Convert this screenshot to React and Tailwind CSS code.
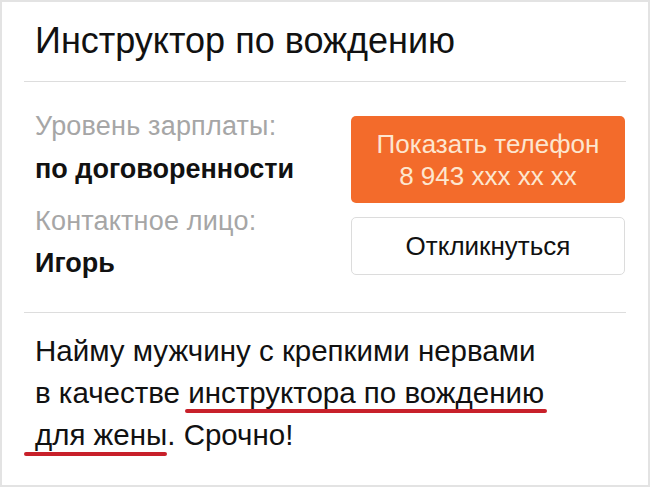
export default function App() {
  return (
    <div className="w-[650px] h-[487px] bg-white border-2 border-[#e3e3e3] font-['Liberation_Sans',Arial,sans-serif] text-[#111] overflow-hidden">
      <div className="px-[22px]">
        <h1 className="pl-[11px] pt-[16px] pb-[17px] text-[36px] leading-[46px] font-normal whitespace-nowrap">
          Инструктор по вождению
        </h1>
        <div className="h-px bg-[#dddddd]" />
        <div className="flex items-start pb-[33px]">
          <div className="flex-1 pl-[11px] pt-[28px] flex flex-col whitespace-nowrap">
            <div className="text-[27px] leading-[32px] tracking-[0.2px] text-[#a6a6a6]">Уровень зарплаты:</div>
            <div className="mt-[11px] text-[27px] leading-[32px] font-bold">по договоренности</div>
            <div className="mt-[20px] text-[27px] leading-[32px] tracking-[0.2px] text-[#a6a6a6]">Контактное лицо:</div>
            <div className="mt-[10px] text-[27px] leading-[32px] font-bold">Игорь</div>
          </div>
          <div className="w-[274px] mr-[1px] pt-[34px] flex flex-col gap-[14px]">
            <div className="h-[87px] rounded-[5px] bg-[#f36b2b] text-[#fde6cf] flex flex-col items-center justify-center text-[26px] leading-[32px]">
              <span>Показать телефон</span>
              <span>8 943 xxx xx xx</span>
            </div>
            <div className="h-[58px] rounded-[5px] border border-[#dcdcdc] flex items-center justify-center text-[26px] leading-[30px]">
              Откликнуться
            </div>
          </div>
        </div>
        <div className="h-px bg-[#dddddd]" />
        <p className="pl-[11px] pt-[17px] text-[29.5px] leading-[42px] whitespace-nowrap">
          Найму мужчину с крепкими нервами
          <br />
          в качестве{" "}
          <span className="relative">
            инструктора по вождению
            <span className="absolute -left-[3px] -right-[3px] top-full mt-[0px] h-[4px] rounded-full bg-[#c8202a]" />
          </span>
          <br />
          <span className="relative">
            для жены
            <span className="absolute -left-[11px] right-0 top-full mt-[1px] h-[4px] rounded-full bg-[#c8202a]" />
          </span>
          . Срочно!
        </p>
      </div>
    </div>
  );
}
